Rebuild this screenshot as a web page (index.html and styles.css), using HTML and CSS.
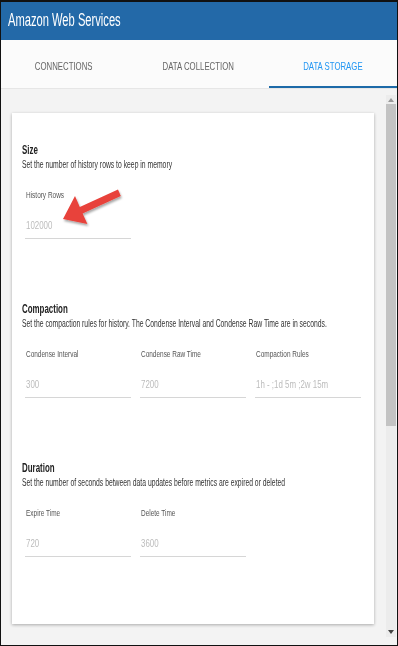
FILE: index.html
```html
<!DOCTYPE html>
<html lang="en">
<head>
  <meta charset="UTF-8">
  <title>Amazon Web Services</title>
  <link rel="stylesheet" href="styles.css">
</head>
<body>
<div class="window">
  <div class="header"><span class="sq">Amazon Web Services</span></div>
  <div class="tabs">
    <div class="tab"><span class="sq">CONNECTIONS</span></div>
    <div class="tab"><span class="sq">DATA COLLECTION</span></div>
    <div class="tab active"><span class="sq">DATA STORAGE</span></div>
  </div>
  <div class="main">
    <div class="pane">
      <div class="card">
        <div class="section">
          <h3><span class="sq">Size</span></h3>
          <p class="desc"><span class="sq">Set the number of history rows to keep in memory</span></p>
          <div class="fields">
            <div class="field">
              <label><span class="sq">History Rows</span></label>
              <div class="value"><span class="sq">102000</span></div>
            </div>
          </div>
        </div>
        <div class="section">
          <h3><span class="sq">Compaction</span></h3>
          <p class="desc"><span class="sq">Set the compaction rules for history. The Condense Interval and Condense Raw Time are in seconds.</span></p>
          <div class="fields">
            <div class="field">
              <label><span class="sq">Condense Interval</span></label>
              <div class="value"><span class="sq">300</span></div>
            </div>
            <div class="field">
              <label><span class="sq">Condense Raw Time</span></label>
              <div class="value"><span class="sq">7200</span></div>
            </div>
            <div class="field">
              <label><span class="sq">Compaction Rules</span></label>
              <div class="value"><span class="sq">1h - ;1d 5m ;2w 15m</span></div>
            </div>
          </div>
        </div>
        <div class="section">
          <h3><span class="sq">Duration</span></h3>
          <p class="desc"><span class="sq">Set the number of seconds between data updates before metrics are expired or deleted</span></p>
          <div class="fields">
            <div class="field">
              <label><span class="sq">Expire Time</span></label>
              <div class="value"><span class="sq">720</span></div>
            </div>
            <div class="field">
              <label><span class="sq">Delete Time</span></label>
              <div class="value"><span class="sq">3600</span></div>
            </div>
          </div>
        </div>
      </div>
    </div>
    <div class="scrollbar">
      <div class="arrow up"></div>
      <div class="thumb"></div>
      <div class="track"></div>
      <div class="arrow down"></div>
    </div>
  </div>
  <svg class="callout" width="398" height="646" viewBox="0 0 398 646">
    <defs>
      <filter id="shadow" x="-20%" y="-20%" width="140%" height="140%">
        <feDropShadow dx="1" dy="2" stdDeviation="1.2" flood-color="#000" flood-opacity="0.35"/>
      </filter>
    </defs>
    <polygon filter="url(#shadow)" fill="#e8423a"
      points="63,219 75,196 79.8,207 118,189.6 120.8,196 82.6,213.4 87.4,224"/>
  </svg>
</div>
</body>
</html>
```

FILE: styles.css
```css
* {
  box-sizing: border-box;
}
body {
  margin: 0;
  font-family: "Liberation Sans", Arial, sans-serif;
  background: #fff;
}
/* the source is narrow, so text is squeezed sideways */
.sq {
  display: inline-block;
  white-space: nowrap;
  transform: scaleX(0.68);
  transform-origin: left center;
}
.window {
  position: relative;
  width: 398px;
  height: 646px;
  border: 1px solid #111;
  border-top-width: 2px;
  background: #f3f3f3;
  display: flex;
  flex-direction: column;
  overflow: hidden;
}
.header {
  height: 38px;
  background: #2369a8;
  color: #fff;
  font-size: 18px;
  padding: 8px 0 0 7px;
}
.header .sq {
  transform: scaleX(0.62);
}
.tabs {
  display: grid;
  grid-template-columns: 1fr 1fr 128px;
  height: 49px;
  background: #fbfbfb;
  border-bottom: 1px solid #e6e6e6;
}
.tab {
  text-align: center;
  font-size: 11px;
  color: #666;
  padding-top: 20px;
}
.tab:first-child {
  padding-right: 9px;
}
.tab:nth-child(2) {
  padding-right: 8px;
}
.tab .sq {
  transform: scaleX(0.71);
  transform-origin: center;
}
.tab.active {
  color: #2196f3;
  border-bottom: 2px solid #1d6aa8;
}
.main {
  flex: 1;
  display: flex;
  min-height: 0;
}
.pane {
  flex: 1;
  min-width: 0;
  padding: 24px 12px 0 11px;
}
.card {
  background: #fff;
  height: 511px;
  box-shadow: 0 1px 3px rgba(0, 0, 0, 0.3);
  padding: 30px 10px 0 10px;
}
.section {
  height: 159px;
}
h3 {
  margin: 0;
  font-size: 12px;
  font-weight: bold;
  color: #222;
  line-height: 14px;
}
h3 .sq {
  transform: scaleX(0.66);
}
.desc {
  margin: 2px 0 0;
  font-size: 10px;
  color: #333;
  line-height: 12px;
  overflow: hidden;
}
.fields {
  display: flex;
  gap: 9px;
  padding: 18px 0 0 3px;
}
.field {
  width: 106px;
  border-bottom: 1px solid #d6d6d6;
  padding-left: 1px;
}
.field label {
  display: block;
  font-size: 9.5px;
  color: #555;
  line-height: 12px;
}
.value {
  font-size: 11px;
  color: #bcbcbc;
  padding: 18px 0 6px;
  line-height: 13px;
}
.value .sq {
  transform: scaleX(0.72);
}
.scrollbar {
  width: 10px;
  flex-shrink: 0;
  margin: 6px 1px 8px 0;
  display: flex;
  flex-direction: column;
  background: #ececec;
}
.arrow {
  height: 9px;
  position: relative;
}
.arrow.up::after,
.arrow.down::after {
  content: "";
  position: absolute;
  left: 2px;
  border-left: 3px solid transparent;
  border-right: 3px solid transparent;
}
.arrow.up::after {
  top: 3px;
  border-bottom: 4px solid #999;
}
.arrow.down::after {
  top: 2px;
  border-top: 4px solid #444;
}
.thumb {
  height: 322px;
  background: #c3c3c3;
}
.track {
  flex: 1;
}
.callout {
  position: absolute;
  left: -1px;
  top: -2px;
  pointer-events: none;
}
```
